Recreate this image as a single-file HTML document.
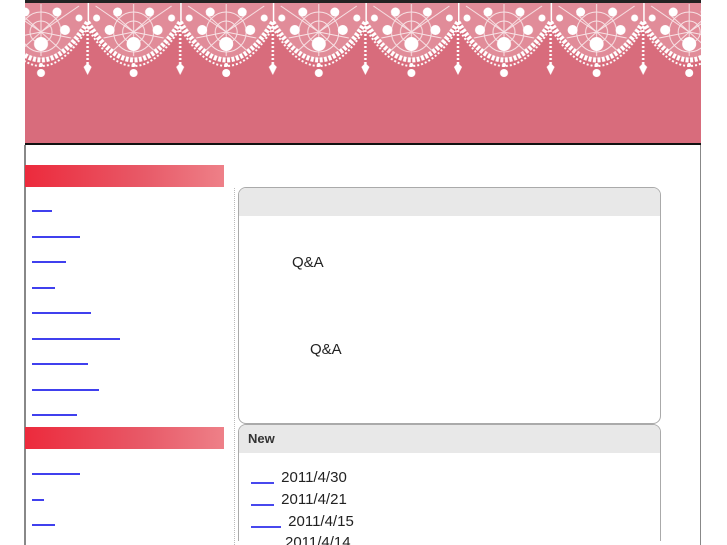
<!DOCTYPE html>
<html style="width:727px;height:545px;overflow:hidden"><head><meta charset="utf-8"><style>
*{margin:0;padding:0}
body{width:727px;height:545px;background:#fff;position:relative;overflow:hidden;font-family:"Liberation Sans","Noto Sans CJK JP",sans-serif}
#hdr{position:absolute;left:25px;top:0;width:676px;height:143px;background:#d86c7c}
#line{position:absolute;left:25px;top:143px;width:676px;height:2px;background:#111}
#lb{position:absolute;left:24px;top:145px;width:2px;height:400px;background:#888}
#rb{position:absolute;left:700px;top:145px;width:1px;height:400px;background:#888}
.bar{position:absolute;left:25px;width:199px;height:22px;background:linear-gradient(90deg,#ec2a3c,#e85a68 60%,#ee8088)}
.u{position:absolute;left:32px;height:2px;background:#4040ee}
#dot{position:absolute;left:234px;top:188px;height:357px;border-left:1px dotted #bbb}
.box{position:absolute;left:238px;width:421px;border:1px solid #aaa;border-radius:8px;background:#fff;overflow:hidden}
.bh{background:#e8e8e8;height:28px;font-weight:bold;font-size:13px;color:#333;padding-left:9px;line-height:27px}
.t{position:absolute;font-size:15px;color:#222}
.lk{display:inline-block;border-bottom:2px solid #4848ee;vertical-align:-2px;margin-right:3px}
</style></head><body>
<div id="hdr">
<svg width="676" height="90" style="position:absolute;left:0;top:0">
<defs>
<pattern id="p" x="-30" y="0" width="92.6" height="90" patternUnits="userSpaceOnUse">
<path d="M0,3 L0,20 Q46,98 92.6,20 L92.6,3 Z" fill="#fff" fill-opacity="0.22"/>
<g fill="none" stroke="#fff" stroke-width="1" opacity="0.75">
<circle cx="46" cy="32" r="20"/><circle cx="46" cy="32" r="11"/>
<path d="M8,6 L46,32 L84,6 M16,38 L46,32 L76,38 M46,4 L46,56 M26,14 L66,50 M66,14 L26,50"/>
</g>
<g fill="#fff">
<circle cx="46" cy="44" r="7"/><circle cx="22" cy="30" r="5"/><circle cx="70" cy="30" r="5"/>
<circle cx="30" cy="12" r="4.5"/><circle cx="62" cy="12" r="4.5"/><circle cx="9" cy="18" r="3.5"/><circle cx="84" cy="18" r="3.5"/>
</g>
<path d="M0,22 Q46,98 92.6,22" fill="none" stroke="#fff" stroke-width="5" stroke-dasharray="3 1.5"/>
<path d="M0,28 Q46,104 92.6,28" fill="none" stroke="#fff" stroke-width="2" stroke-dasharray="2 2"/>
<rect x="-1" y="0" width="2.5" height="24" fill="#fff"/>
<line x1="0" y1="26" x2="0" y2="64" stroke="#fff" stroke-width="2.5" stroke-dasharray="2 2"/>
<line x1="92.6" y1="26" x2="92.6" y2="64" stroke="#fff" stroke-width="2.5" stroke-dasharray="2 2"/>
<path d="M-4,67 L0,63 L4,67 L0,75Z M88.6,67 L92.6,63 L96.6,67 L92.6,75Z" fill="#fff"/>
<circle cx="46" cy="73" r="4" fill="#fff"/><circle cx="46" cy="65" r="2" fill="#fff"/>
</pattern>
</defs>
<rect width="676" height="90" fill="url(#p)"/>
<rect width="676" height="3" fill="#222"/>
</svg>
</div>
<div id="line"></div><div id="lb"></div><div id="rb"></div>
<div class="bar" style="top:165px"></div>
<div class="bar" style="top:427px"></div>
<div class="u" style="top:210px;width:20px"></div>
<div class="u" style="top:236px;width:48px"></div>
<div class="u" style="top:261px;width:34px"></div>
<div class="u" style="top:287px;width:23px"></div>
<div class="u" style="top:312px;width:59px"></div>
<div class="u" style="top:338px;width:88px"></div>
<div class="u" style="top:363px;width:56px"></div>
<div class="u" style="top:389px;width:67px"></div>
<div class="u" style="top:414px;width:45px"></div>
<div class="u" style="top:473px;width:48px"></div>
<div class="u" style="top:499px;width:12px"></div>
<div class="u" style="top:524px;width:23px"></div>
<div id="dot"></div>
<div class="box" style="top:187px;height:235px"><div class="bh"></div></div>
<div class="box" style="top:424px;height:116px;border-bottom:none;border-radius:8px 8px 0 0"><div class="bh">New</div></div>
<div class="t" style="left:292px;top:254px">Q&amp;A</div>
<div class="t" style="left:310px;top:341px">Q&amp;A</div>
<div class="t" style="left:251px;top:469px"><span class="lk" style="width:23px"></span> 2011/4/30</div>
<div class="t" style="left:251px;top:491px"><span class="lk" style="width:23px"></span> 2011/4/21</div>
<div class="t" style="left:251px;top:513px"><span class="lk" style="width:30px"></span> 2011/4/15</div>
<div class="t" style="left:285px;top:534px">2011/4/14</div>
</body></html>
